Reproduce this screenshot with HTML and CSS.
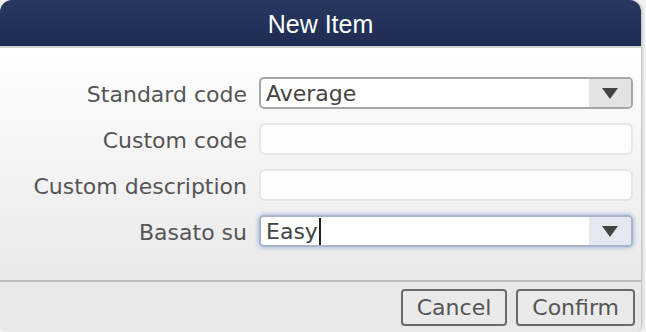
FILE: index.html
```html
<!DOCTYPE html>
<html lang="en">
<head>
    <meta charset="UTF-8">
    <meta name="viewport" content="width=device-width, initial-scale=1.0">
    <title>New Item</title>
    <link rel="stylesheet" href="styles.css">
</head>
<body>

<div class="dialog">
    <div class="dialog-header">New Item</div>

    <div class="dialog-body">
        <label class="field-label" for="standard-code">Standard code</label>
        <div class="select" id="standard-code">
            <span class="select-value">Average</span>
            <span class="select-arrow"></span>
        </div>

        <label class="field-label" for="custom-code">Custom code</label>
        <input class="text-input" id="custom-code" type="text">

        <label class="field-label" for="custom-description">Custom description</label>
        <input class="text-input" id="custom-description" type="text">

        <label class="field-label" for="based-on">Basato su</label>
        <div class="select focused" id="based-on">
            <span class="select-value">Easy<span class="caret"></span></span>
            <span class="select-arrow"></span>
        </div>
    </div>

    <div class="dialog-footer">
        <button class="btn">Cancel</button>
        <button class="btn">Confirm</button>
    </div>
</div>

</body>
</html>
```

FILE: styles.css
```css
body {
    margin: 0;
    padding: 0;
    background: #f2f2f2;
    font-family: "DejaVu Sans", Verdana, sans-serif;
    font-size: 22px;
}

.dialog {
    width: 641px;
    height: 332px;
    display: flex;
    flex-direction: column;
    border-right: 1px solid #c8c8c8;
    border-radius: 12px 12px 8px 8px;
    overflow: hidden;
    box-shadow: 1px 0 3px rgba(0, 0, 0, 0.15);
}

.dialog-header {
    height: 46px;
    line-height: 48px;
    text-align: center;
    color: #fff;
    font-family: "Liberation Sans", Arial, sans-serif;
    font-size: 25px;
    background: linear-gradient(to bottom, #27375f, #1f2c53);
    border-bottom: 2px solid #d2d2d2;
}

.dialog-body {
    flex: 1;
    display: grid;
    grid-template-columns: 247px 1fr;
    column-gap: 12px;
    row-gap: 14px;
    align-content: start;
    padding: 29px 8px 0 0;
    background: linear-gradient(to bottom, #ffffff, #e9e9e9);
    border-bottom: 2px solid #bdbdbd;
}

.field-label {
    color: #555;
    text-align: right;
    line-height: 36px;
    height: 32px;
    white-space: nowrap;
}

.text-input {
    box-sizing: border-box;
    height: 32px;
    margin: 0;
    border: 2px solid #e6e6e6;
    border-radius: 6px;
    background: #fdfdfd;
    font: inherit;
    outline: none;
}

.select {
    box-sizing: border-box;
    height: 32px;
    display: flex;
    border: 2px solid #a6a6a6;
    border-radius: 5px;
    background: #fff;
    overflow: hidden;
}

.select-value {
    flex: 1;
    padding-left: 5px;
    line-height: 30px;
    color: #444;
}

.select-arrow {
    width: 42px;
    display: flex;
    align-items: center;
    justify-content: center;
    background: #e3e3e3;
}

.select-arrow::after {
    content: "";
    border-left: 8px solid transparent;
    border-right: 8px solid transparent;
    border-top: 11px solid #444;
}

.select.focused {
    border-color: #a9b4c6;
    box-shadow: 0 0 4px 1px rgba(110, 150, 215, 0.55);
}

.select.focused .select-arrow {
    background: #e3e8f1;
}

.caret {
    display: inline-block;
    width: 2px;
    height: 28px;
    margin-left: 1px;
    vertical-align: -7px;
    background: #222;
}

.dialog-footer {
    box-sizing: border-box;
    height: 50px;
    display: flex;
    justify-content: flex-end;
    align-items: flex-start;
    gap: 9px;
    padding: 7px 6px 0 0;
    background: #e8e8e8;
}

.btn {
    height: 37px;
    padding: 0 14px;
    border: 2px solid #6a6a6a;
    border-radius: 4px;
    background: #eaeaea;
    color: #555;
    font: inherit;
    cursor: pointer;
}
```
